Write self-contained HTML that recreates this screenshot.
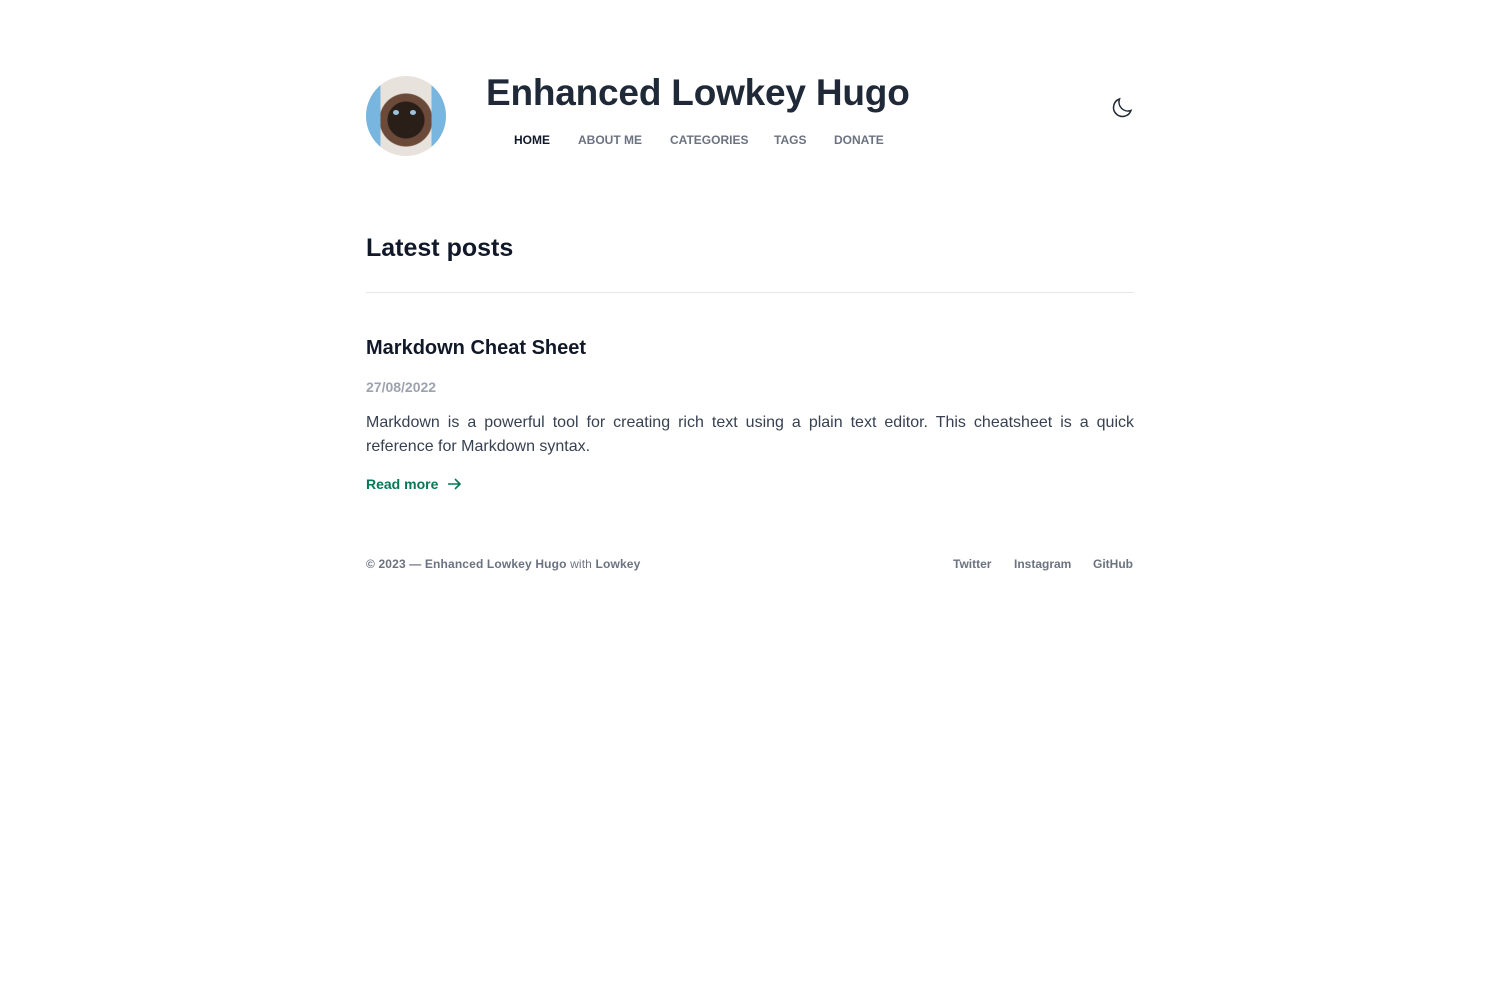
<!DOCTYPE html>
<html><head><meta charset="utf-8"><style>
body{margin:0;background:#fff;font-family:"Liberation Sans",sans-serif;}
.abs{position:absolute;white-space:nowrap}
</style></head><body>
<div class="abs" style="left:366px;top:76px;width:80px;height:80px;border-radius:50%;background:radial-gradient(circle at 50% 55%,#2a1e18 0 18px,#6b4a3a 19px 26px,#e8e2dc 27px 60px),#7ab8e0;overflow:hidden">
<div style="position:absolute;left:0;top:0;width:80px;height:80px;background:linear-gradient(90deg,#78b6e0 0 18%,transparent 18% 82%,#78b6e0 82%);"></div>
<div style="position:absolute;left:27px;top:34px;width:6px;height:5px;border-radius:50%;background:#9cc2e0"></div>
<div style="position:absolute;left:44px;top:34px;width:6px;height:5px;border-radius:50%;background:#9cc2e0"></div>
</div>
<div class="abs" style="left:486px;top:72px;font-size:37px;font-weight:bold;color:#1f2937;letter-spacing:-0.2px">Enhanced Lowkey Hugo</div>
<div class="abs" style="left:514px;top:133px;font-size:12px;font-weight:bold;color:#111827">HOME</div>
<div class="abs" style="left:578px;top:133px;font-size:12px;font-weight:bold;color:#6b7280">ABOUT ME</div>
<div class="abs" style="left:670px;top:133px;font-size:12px;font-weight:bold;color:#6b7280">CATEGORIES</div>
<div class="abs" style="left:774px;top:133px;font-size:12px;font-weight:bold;color:#6b7280">TAGS</div>
<div class="abs" style="left:834px;top:133px;font-size:12px;font-weight:bold;color:#6b7280">DONATE</div>
<svg class="abs" style="left:1110px;top:96px" width="24" height="24" viewBox="0 0 24 24" fill="none" stroke="#1f2937" stroke-width="1.5"><path d="M21 14.5A9 9 0 0 1 9.5 3 9 9 0 1 0 21 14.5z"/></svg>
<div class="abs" style="left:366px;top:234px;font-size:25px;font-weight:bold;color:#111827">Latest posts</div>
<div class="abs" style="left:366px;top:292px;width:768px;height:1px;background:#e5e7eb"></div>
<div class="abs" style="left:366px;top:337px;font-size:20px;font-weight:bold;color:#111827">Markdown Cheat Sheet</div>
<div class="abs" style="left:366px;top:379px;font-size:14px;font-weight:bold;color:#9ca3af">27/08/2022</div>
<div class="abs" style="left:366px;top:411px;width:768px;white-space:normal;font-size:16px;line-height:24px;color:#374151;text-align:justify">Markdown is a powerful tool for creating rich text using a plain text editor. This cheatsheet is a quick reference for Markdown syntax.</div>
<div class="abs" style="left:366px;top:476px;font-size:14px;font-weight:bold;color:#047857">Read more</div>
<svg class="abs" style="left:446px;top:476px" width="16" height="16" viewBox="0 0 16 16" fill="none" stroke="#047857" stroke-width="1.6"><path d="M2 8h12M9 3l5 5-5 5"/></svg>
<div class="abs" style="left:366px;top:557px;font-size:12px;font-weight:bold;color:#6b7280;letter-spacing:0.15px">© 2023 — Enhanced Lowkey Hugo <span style="font-weight:normal">with</span> Lowkey</div>
<div class="abs" style="left:953px;top:557px;font-size:12px;font-weight:bold;color:#6b7280">Twitter</div>
<div class="abs" style="left:1014px;top:557px;font-size:12px;font-weight:bold;color:#6b7280">Instagram</div>
<div class="abs" style="left:1093px;top:557px;font-size:12px;font-weight:bold;color:#6b7280">GitHub</div>
</body></html>
